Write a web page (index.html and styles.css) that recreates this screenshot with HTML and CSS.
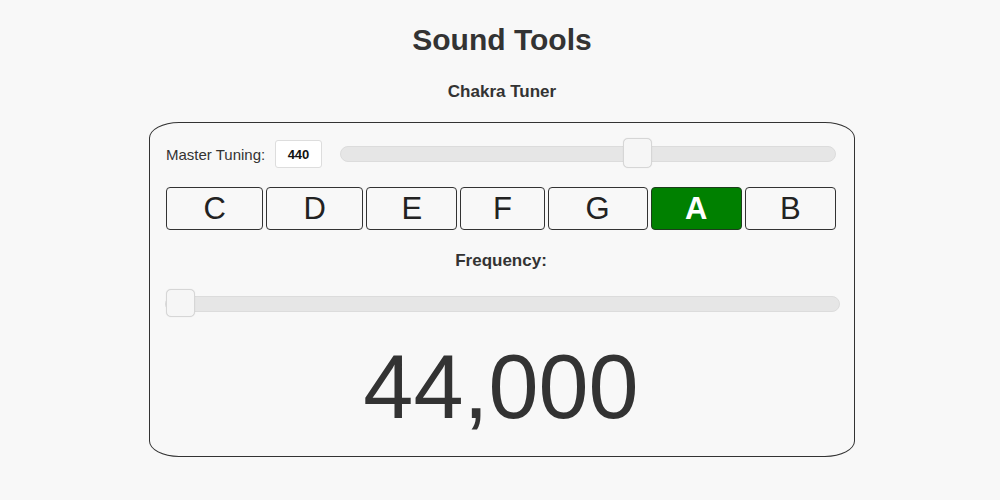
FILE: index.html
```html
<!DOCTYPE html>
<html>
<head>
<meta charset="utf-8">
<title>Sound Tools</title>
<link rel="stylesheet" href="styles.css">
</head>
<body>
<div class="page">
  <h1 class="title">Sound Tools</h1>
  <h2 class="subtitle">Chakra Tuner</h2>
  <div class="tuner">
    <div class="master-row">
      <label class="master-label">Master Tuning:</label>
      <div class="master-input">440</div>
      <div class="slider master-slider">
        <div class="thumb" style="left: calc(60% - 14px);"></div>
      </div>
    </div>
    <div class="notes">
      <button class="note">C</button>
      <button class="note">D</button>
      <button class="note">E</button>
      <button class="note">F</button>
      <button class="note">G</button>
      <button class="note active">A</button>
      <button class="note">B</button>
    </div>
    <div class="freq-label">Frequency:</div>
    <div class="slider freq-slider">
      <div class="thumb" style="left: 0;"></div>
    </div>
    <div class="freq-value">44,000</div>
  </div>
</div>
</body>
</html>
```
FILE: styles.css
```css
html, body {
  margin: 0;
  padding: 0;
  background: #f8f8f8;
}
body {
  font-family: "Liberation Sans", Arial, Helvetica, sans-serif;
  color: #333;
}
.page {
  padding-left: 4px;
  padding-top: 22px;
}
.title {
  margin: 0;
  font-size: 30px;
  line-height: 36px;
  font-weight: bold;
  text-align: center;
  color: #333;
}
.subtitle {
  margin: 24px 0 0;
  font-size: 17px;
  line-height: 20px;
  font-weight: bold;
  text-align: center;
  color: #333;
}
.tuner {
  width: 706px;
  box-sizing: border-box;
  margin: 20px auto 0;
  border: 1px solid #333;
  border-radius: 30px / 16px;
  padding: 16px 18px 19px 16px;
}
.master-row {
  display: flex;
  align-items: center;
  height: 30px;
}
.master-label {
  font-size: 15px;
  color: #333;
  width: 101px;
}
.master-input {
  margin-left: 8px;
  width: 47px;
  height: 28px;
  box-sizing: border-box;
  border: 1px solid #ddd;
  border-radius: 3px;
  background: #fff;
  font-size: 13px;
  font-weight: bold;
  color: #111;
  display: flex;
  align-items: center;
  justify-content: center;
}
.slider {
  position: relative;
  height: 16px;
  box-sizing: border-box;
  background: #e6e6e6;
  border: 1px solid #dcdcdc;
  border-radius: 8px;
}
.master-slider {
  flex: 1;
  margin-left: 18px;
}
.thumb {
  position: absolute;
  top: -9px;
  width: 29px;
  height: 30px;
  box-sizing: border-box;
  background: #f6f6f6;
  border: 1px solid #d6d6d6;
  border-radius: 5px;
  box-shadow: 0 0 1px rgba(0,0,0,0.15);
}
.notes {
  margin-top: 18px;
  display: grid;
  grid-template-columns: 97fr 97fr 91fr 84fr 100fr 91fr 91fr;
  column-gap: 3px;
}
.note {
  height: 43px;
  box-sizing: border-box;
  border: 1px solid #333;
  border-radius: 4px;
  background: #f8f8f8;
  font-family: "Liberation Sans", Arial, Helvetica, sans-serif;
  font-size: 31px;
  color: #222;
  padding: 0;
  line-height: 41px;
}
.note.active {
  background: #008000;
  color: #fff;
  font-weight: bold;
  border-color: #1d3d1d;
}
.freq-label {
  margin-top: 21px;
  font-size: 17px;
  line-height: 20px;
  font-weight: bold;
  text-align: center;
  color: #333;
}
.freq-slider {
  margin: 25px -4px 0 -1px;
}
.freq-slider .thumb {
  top: -8px;
  height: 28px;
}
.freq-value {
  margin-top: 25px;
  font-size: 90px;
  line-height: 100px;
  text-align: center;
  color: #333;
}
```
